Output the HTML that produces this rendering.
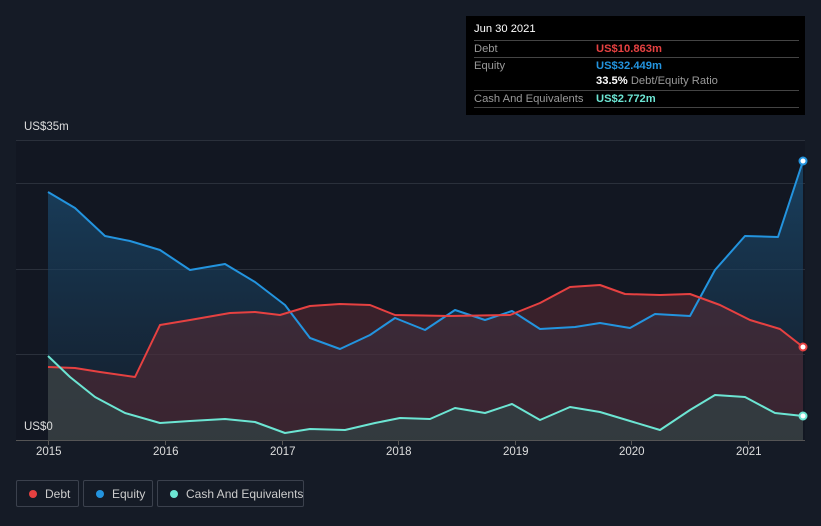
<!DOCTYPE html>
<html><head><style>
body{margin:0;background:#151b26;width:821px;height:526px;overflow:hidden;font-family:"Liberation Sans",sans-serif;position:relative}
.tt{position:absolute;left:466px;top:16px;width:339px;height:99px;background:#000;color:#fff;font-size:11.2px}
.row{position:absolute;left:8px;width:325px;border-top:1px solid #444;height:16px;line-height:16px}
.lbl{color:#999;position:absolute;left:0}
.val{position:absolute;left:122px;font-weight:bold}
.leg{position:absolute;top:480px;height:27px;border:1px solid #3b414d;border-radius:2px;color:#ccc;font-size:12px;line-height:26px;box-sizing:border-box;white-space:nowrap}
.dot{position:absolute;top:9px;width:8px;height:8px;border-radius:50%}
.ax{position:absolute;color:#ddd;font-size:11.5px}
</style></head><body>
<svg width="821" height="526" style="position:absolute;left:0;top:0">
<defs>
<linearGradient id="ge" x1="0" y1="0" x2="0" y2="1"><stop offset="0" stop-color="#1a4a6e" stop-opacity=".8"/><stop offset="1" stop-color="#1a3a55" stop-opacity=".2"/></linearGradient>
</defs>
<rect x="16" y="140" width="789" height="300" fill="#121722"/>
<g stroke="#2a303b" stroke-width="1">
<line x1="16" y1="140.5" x2="805" y2="140.5"/><line x1="16" y1="183.5" x2="805" y2="183.5"/><line x1="16" y1="269.5" x2="805" y2="269.5"/><line x1="16" y1="354.5" x2="805" y2="354.5"/>
</g>
<polygon fill="url(#ge)" points="48,192 75,208 105,236 130,241 160,250 190,270 225,264 255,282 285,305 310,338 340,349 370,335 395,318 425,330 455,310 485,320 512,311 540,329 575,327 600,323 630,328 655,314 690,316 715,270 745,236 778,237 803,161 803,440 48,440"/>
<polygon fill="#5a2a33" fill-opacity=".55" points="48,367 75,368 100,372 135,377 160,325 190,320 230,313 255,312 280,315 310,306 340,304 370,305 395,315 450,316 510,315 540,303 570,287 600,285 625,294 660,295 690,294 720,305 750,320 780,329 803,347 803,440 48,440"/>
<polygon fill="#2f4a4a" fill-opacity=".6" points="48,356 70,377 95,397 125,413 160,423 190,421 225,419 255,422 285,433 310,429 345,430 375,423 400,418 430,419 455,408 485,413 512,404 540,420 570,407 600,412 630,421 660,430 690,410 715,395 745,397 775,413 803,416 803,440 48,440"/>
<g fill="none" stroke-width="2" stroke-linejoin="round">
<polyline stroke="#2394df" points="48,192 75,208 105,236 130,241 160,250 190,270 225,264 255,282 285,305 310,338 340,349 370,335 395,318 425,330 455,310 485,320 512,311 540,329 575,327 600,323 630,328 655,314 690,316 715,270 745,236 778,237 803,161"/>
<polyline stroke="#e64141" points="48,367 75,368 100,372 135,377 160,325 190,320 230,313 255,312 280,315 310,306 340,304 370,305 395,315 450,316 510,315 540,303 570,287 600,285 625,294 660,295 690,294 720,305 750,320 780,329 803,347"/>
<polyline stroke="#6ce5d3" points="48,356 70,377 95,397 125,413 160,423 190,421 225,419 255,422 285,433 310,429 345,430 375,423 400,418 430,419 455,408 485,413 512,404 540,420 570,407 600,412 630,421 660,430 690,410 715,395 745,397 775,413 803,416"/>
</g>
<circle cx="803" cy="161" r="3.5" fill="#fff" stroke="#2394df" stroke-width="2"/>
<circle cx="803" cy="347" r="3.5" fill="#fff" stroke="#e64141" stroke-width="2"/>
<circle cx="803" cy="416" r="3.5" fill="#fff" stroke="#6ce5d3" stroke-width="2"/>
<line x1="16" y1="440.5" x2="805" y2="440.5" stroke="#555"/>
<g stroke="#555"><line x1="48.5" y1="440" x2="48.5" y2="445"/><line x1="165.5" y1="440" x2="165.5" y2="445"/><line x1="282.5" y1="440" x2="282.5" y2="445"/><line x1="398.5" y1="440" x2="398.5" y2="445"/><line x1="515.5" y1="440" x2="515.5" y2="445"/><line x1="631.5" y1="440" x2="631.5" y2="445"/><line x1="748.5" y1="440" x2="748.5" y2="445"/></g>
</svg>
<div class="ax" style="left:24px;top:121px">US$35m</div>
<div class="ax" style="left:24px;top:421px">US$0</div>
<div class="ax" style="left:36px;top:446px">2015</div>
<div class="ax" style="left:153px;top:446px">2016</div>
<div class="ax" style="left:270px;top:446px">2017</div>
<div class="ax" style="left:386px;top:446px">2018</div>
<div class="ax" style="left:503px;top:446px">2019</div>
<div class="ax" style="left:619px;top:446px">2020</div>
<div class="ax" style="left:736px;top:446px">2021</div>
<div class="tt">
<div style="position:absolute;left:8px;top:7px">Jun 30 2021</div>
<div class="row" style="top:24px"><span class="lbl">Debt</span><span class="val" style="color:#e64141">US$10.863m</span></div>
<div class="row" style="top:41px"><span class="lbl">Equity</span><span class="val" style="color:#2394df">US$32.449m</span></div>
<div class="row" style="top:57px;border-top:none"><span class="val">33.5% <span style="color:#999;font-weight:normal">Debt/Equity Ratio</span></span></div>
<div class="row" style="top:74px;border-bottom:1px solid #444"><span class="lbl">Cash And Equivalents</span><span class="val" style="color:#6ce5d3">US$2.772m</span></div>
</div>
<div class="leg" style="left:16px;width:63px"><span class="dot" style="left:12px;background:#e64141"></span><span style="position:absolute;left:28px">Debt</span></div>
<div class="leg" style="left:83px;width:70px"><span class="dot" style="left:12px;background:#2394df"></span><span style="position:absolute;left:28px">Equity</span></div>
<div class="leg" style="left:157px;width:147px"><span class="dot" style="left:12px;background:#6ce5d3"></span><span style="position:absolute;left:28px">Cash And Equivalents</span></div>
</body></html>
